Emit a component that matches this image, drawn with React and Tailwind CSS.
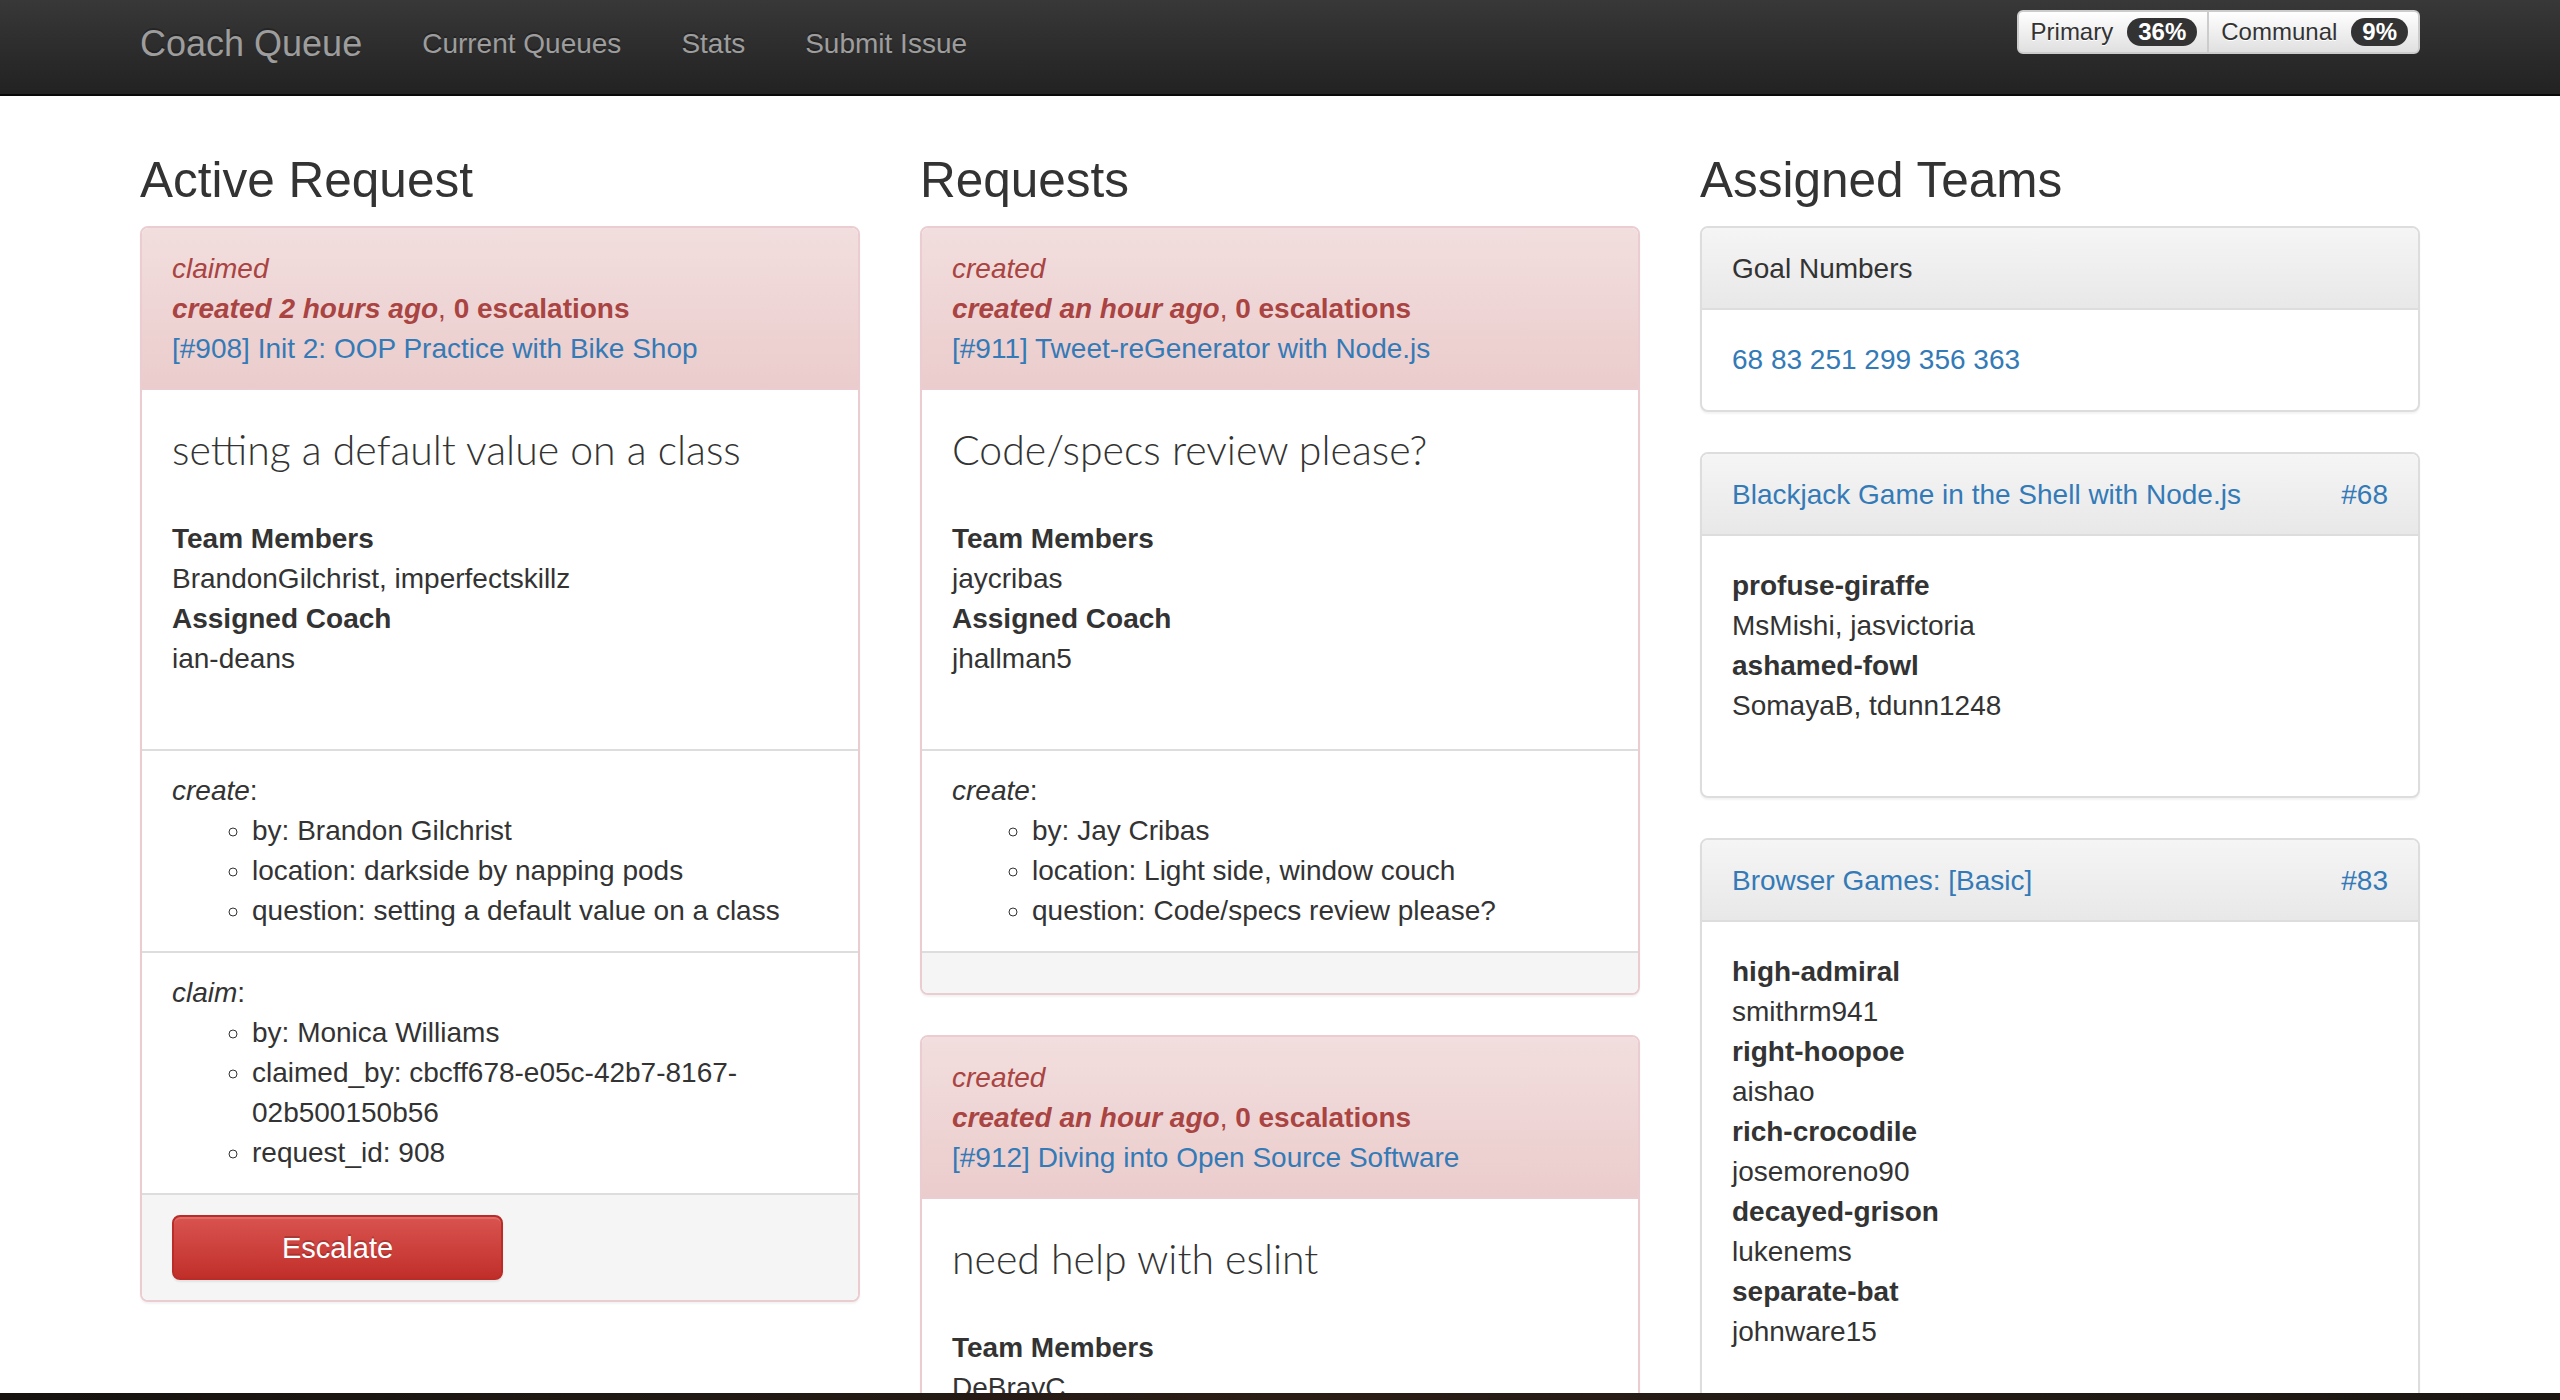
import React from 'react'

const LINK = 'text-[#337ab7]'

function DangerPanel({ status, age, title, question, members, coach, sections, footer, className }) {
  return (
    <div className={'mb-[40px] overflow-hidden rounded-[8px] border-2 border-[#ebccd1] bg-white shadow-[0_2px_2px_rgba(0,0,0,0.05)] ' + (className || '')}>
      <div className="border-b-2 border-[#ebccd1] bg-linear-to-b from-[#f2dede] to-[#ebcccc] px-[30px] pt-[21px] pb-[19px] text-[#a94442]">
        <div><em>{status}</em></div>
        <div>
          <strong><em>{age}</em></strong>, <strong>0 escalations</strong>
        </div>
        <div className={LINK}>{title}</div>
      </div>
      <div className="px-[30px] pt-[30px] pb-[30px]">
        <h3 className="mt-[8px] mb-[47px] font-['Lato','Roboto',sans-serif] text-[41px] leading-[44px] font-light text-[#333]">
          {question}
        </h3>
        <div className="mb-[40px]">
          <div className="font-bold">Team Members</div>
          <div>{members}</div>
          <div className="font-bold">Assigned Coach</div>
          <div>{coach}</div>
        </div>
      </div>
      {sections.map((s) => (
        <div key={s.name} className="border-t-2 border-[#ddd] px-[30px] py-[20px]">
          <div>
            <em>{s.name}</em>:
          </div>
          <ul className="list-[circle] pl-[80px]">
            {s.items.map((it) => (
              <li key={it}>{it}</li>
            ))}
          </ul>
        </div>
      ))}
      <div className="min-h-[82px] border-t-2 border-[#ddd] bg-[#f5f5f5] px-[30px] py-[20px]">{footer}</div>
    </div>
  )
}

function TeamPanel({ title, number, children }) {
  return (
    <div className="mb-[40px] overflow-hidden rounded-[8px] border-2 border-[#ddd] bg-white shadow-[0_2px_2px_rgba(0,0,0,0.05)]">
      <div className="flex justify-between border-b-2 border-[#ddd] bg-linear-to-b from-[#f5f5f5] to-[#e8e8e8] px-[30px] pt-[21px] pb-[19px]">
        {title}
        {number && <span className={LINK}>{number}</span>}
      </div>
      <div className="p-[30px]">{children}</div>
    </div>
  )
}

function Members({ teams }) {
  return (
    <div className="mb-[40px]">
      {teams.map(([name, people]) => (
        <div key={name}>
          <div className="font-bold">{name}</div>
          <div>{people}</div>
        </div>
      ))}
    </div>
  )
}

export default function App() {
  return (
    <div className="flex h-[1400px] flex-col overflow-hidden bg-white font-['Liberation_Sans',Arial,sans-serif] text-[28px] leading-[40px] text-[#333]">
      <nav className="h-[96px] shrink-0 border-b-2 border-[#080808] bg-linear-to-b from-[#383838] to-[#222]">
        <div className="mx-auto flex w-[2340px] items-start justify-between px-[30px]">
          <div className="flex items-start pt-[24px] text-[#9d9d9d] [text-shadow:0_-2px_0_rgba(0,0,0,0.25)]">
            <span className="pr-[30px] text-[36px] leading-[40px]">Coach Queue</span>
            <span className="px-[30px]">Current Queues</span>
            <span className="px-[30px]">Stats</span>
            <span className="px-[30px]">Submit Issue</span>
          </div>
          <div className="mt-[10px] flex text-[24px] leading-[36px] text-[#333]">
            <button className="flex h-[44px] items-center gap-[14px] rounded-l-[6px] border-2 border-[#ccc] bg-linear-to-b from-white to-[#e0e0e0] pr-[10px] pl-[12px] [text-shadow:0_1px_0_#fff]">
              Primary
              <span className="rounded-[20px] bg-[#333] px-[11px] py-[2px] text-[24px] leading-[24px] font-bold text-white [text-shadow:none]">36%</span>
            </button>
            <button className="-ml-[2px] flex h-[44px] items-center gap-[14px] rounded-r-[6px] border-2 border-[#ccc] bg-linear-to-b from-white to-[#e0e0e0] pr-[10px] pl-[12px] [text-shadow:0_1px_0_#fff]">
              Communal
              <span className="rounded-[20px] bg-[#333] px-[11px] py-[2px] text-[24px] leading-[24px] font-bold text-white [text-shadow:none]">9%</span>
            </button>
          </div>
        </div>
      </nav>

      <main className="min-h-0 flex-1 overflow-hidden">
        <div className="mx-auto grid w-[2340px] grid-cols-3 gap-x-[60px] px-[30px] pt-[57px]">
          <section>
            <h2 className="mb-[20px] text-[49.5px] leading-[53px] font-medium">Active Request</h2>
            <DangerPanel
              status="claimed"
              age="created 2 hours ago"
              title="[#908] Init 2: OOP Practice with Bike Shop"
              question="setting a default value on a class"
              members="BrandonGilchrist, imperfectskillz"
              coach="ian-deans"
              sections={[
                {
                  name: 'create',
                  items: ['by: Brandon Gilchrist', 'location: darkside by napping pods', 'question: setting a default value on a class'],
                },
                {
                  name: 'claim',
                  items: ['by: Monica Williams', 'claimed_by: cbcff678-e05c-42b7-8167-02b500150b56', 'request_id: 908'],
                },
              ]}
              footer={
                <button className="h-[65px] w-[331px] rounded-[8px] border-2 border-[#b92c28] bg-linear-to-b from-[#d9534f] to-[#c12e2a] text-[29px] text-white shadow-[inset_0_2px_0_rgba(255,255,255,0.15),0_2px_2px_rgba(0,0,0,0.075)] [text-shadow:0_-2px_0_rgba(0,0,0,0.2)]">
                  Escalate
                </button>
              }
            />
          </section>

          <section>
            <h2 className="mb-[20px] text-[49.5px] leading-[53px] font-medium">Requests</h2>
            <DangerPanel
              status="created"
              age="created an hour ago"
              title="[#911] Tweet-reGenerator with Node.js"
              question="Code/specs review please?"
              members="jaycribas"
              coach="jhallman5"
              sections={[
                {
                  name: 'create',
                  items: ['by: Jay Cribas', 'location: Light side, window couch', 'question: Code/specs review please?'],
                },
              ]}
              className="[&>div:last-child]:min-h-[42px]"
            />
            <DangerPanel
              status="created"
              age="created an hour ago"
              title="[#912] Diving into Open Source Software"
              question="need help with eslint"
              members="DeBrayC"
              coach="jhallman5"
              sections={[
                {
                  name: 'create',
                  items: ['by: DeBray Cunningham', 'location: by the whiteboard', 'question: need help with eslint'],
                },
              ]}
              className="[&>div:last-child]:min-h-[42px]"
            />
          </section>

          <section>
            <h2 className="mb-[20px] text-[49.5px] leading-[53px] font-medium">Assigned Teams</h2>
            <TeamPanel title={<span>Goal Numbers</span>}>
              <div className={LINK}>68 83 251 299 356 363</div>
            </TeamPanel>
            <TeamPanel title={<span className={LINK}>Blackjack Game in the Shell with Node.js</span>} number="#68">
              <Members
                teams={[
                  ['profuse-giraffe', 'MsMishi, jasvictoria'],
                  ['ashamed-fowl', 'SomayaB, tdunn1248'],
                ]}
              />
            </TeamPanel>
            <TeamPanel title={<span className={LINK}>Browser Games: [Basic]</span>} number="#83">
              <Members
                teams={[
                  ['high-admiral', 'smithrm941'],
                  ['right-hoopoe', 'aishao'],
                  ['rich-crocodile', 'josemoreno90'],
                  ['decayed-grison', 'lukenems'],
                  ['separate-bat', 'johnware15'],
                ]}
              />
            </TeamPanel>
          </section>
        </div>
      </main>

      <div className="h-[7px] shrink-0 bg-linear-to-r from-[#15120f] via-[#2a1d16] to-[#1b1612]" />
    </div>
  )
}
